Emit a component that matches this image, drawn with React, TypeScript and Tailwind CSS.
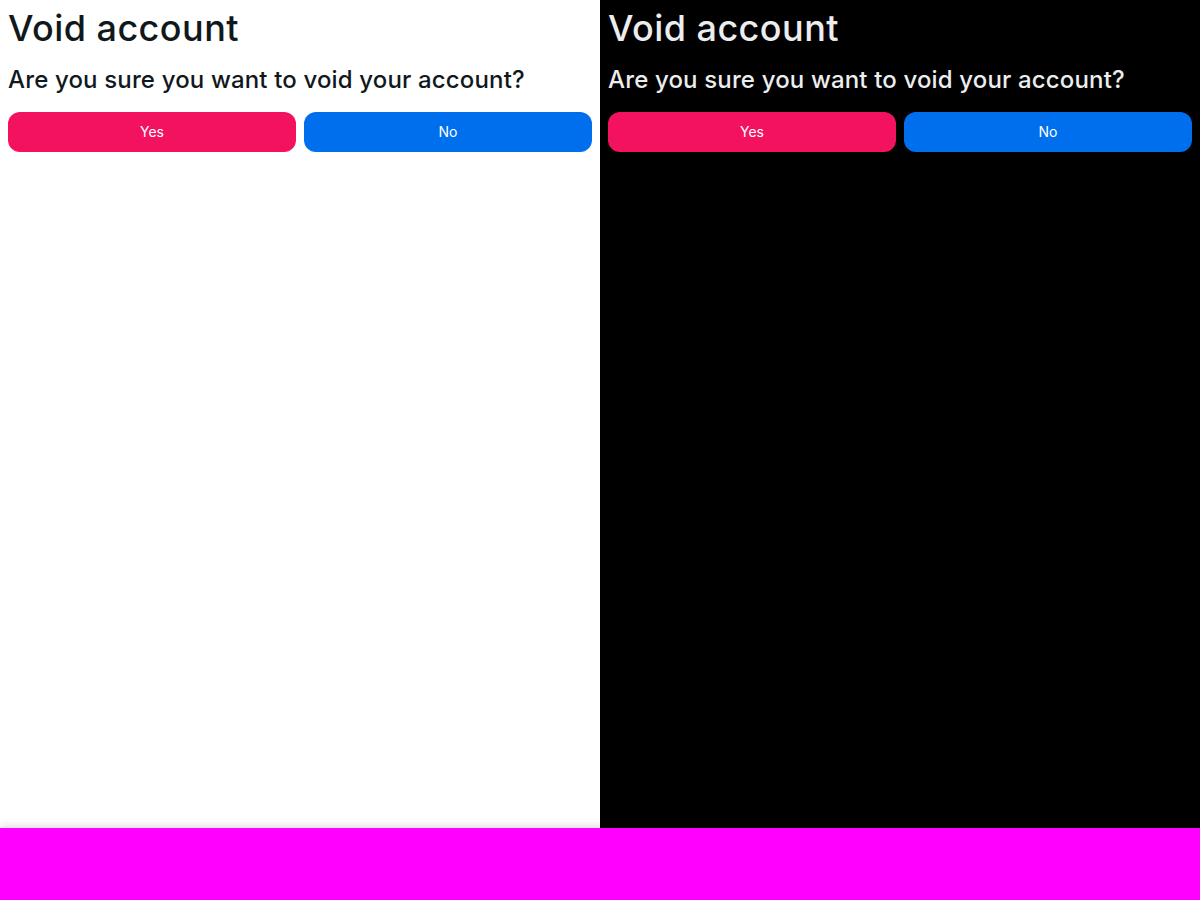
import React from 'react';

const Panel: React.FC<{ dark?: boolean }> = ({ dark }) => (
  <div className={`flex-1 p-2 ${dark ? 'bg-black text-[#ECEDEE]' : 'bg-white text-[#11181C]'}`}>
    <h1 className="text-4xl leading-[40px] font-medium tracking-[0.45px]">Void account</h1>
    <p className="mt-4 text-2xl font-medium tracking-[0.15px]">Are you sure you want to void your account?</p>
    <div className="mt-4 flex gap-2">
      <button className="flex-1 h-10 rounded-xl bg-[#F31260] text-white text-sm">Yes</button>
      <button className="flex-1 h-10 rounded-xl bg-[#006FEE] text-white text-sm">No</button>
    </div>
  </div>
);

const App: React.FC = () => (
  <div className="h-[900px] flex flex-col" style={{ fontFamily: 'Inter, sans-serif' }}>
    <div className="flex h-[828px]">
      <Panel />
      <Panel dark />
    </div>
    <div className="h-[72px] bg-[#FF00FF] shadow-[0_-2px_8px_rgba(0,0,0,0.15)]" />
  </div>
);

export default App;
